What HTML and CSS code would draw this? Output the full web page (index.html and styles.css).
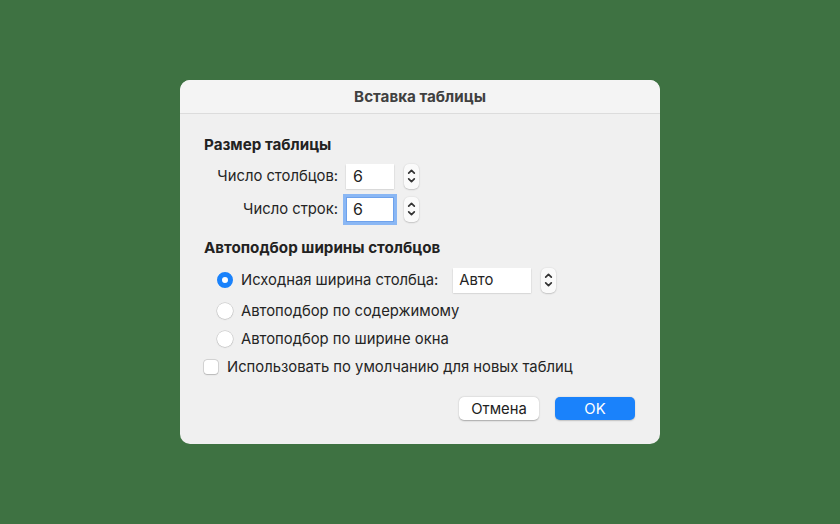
FILE: index.html
```html
<!DOCTYPE html>
<html lang="ru">
<head>
<meta charset="utf-8">
<link rel="stylesheet" href="styles.css">
</head>
<body>
<div class="dialog">
  <div class="titlebar">Вставка таблицы</div>
  <div class="content">
    <div class="section-title">Размер таблицы</div>
    <div class="size-rows">
      <div class="row">
        <span class="label">Число столбцов:</span>
        <span class="field num">6</span>
        <span class="stepper"><svg viewBox="0 0 16 26" width="16" height="26"><path d="M5 10 L8 7 L11 10" /><path d="M5 16 L8 19 L11 16" /></svg></span>
      </div>
      <div class="row">
        <span class="label">Число строк:</span>
        <span class="field num focus">6</span>
        <span class="stepper"><svg viewBox="0 0 16 26" width="16" height="26"><path d="M5 10 L8 7 L11 10" /><path d="M5 16 L8 19 L11 16" /></svg></span>
      </div>
    </div>
    <div class="section-title second">Автоподбор ширины столбцов</div>
    <div class="radios">
      <div class="radio-row first">
        <span class="radio on"></span>
        <span class="rlabel">Исходная ширина столбца:</span>
        <span class="field auto">Авто</span>
        <span class="stepper"><svg viewBox="0 0 16 26" width="16" height="26"><path d="M5 10 L8 7 L11 10" /><path d="M5 16 L8 19 L11 16" /></svg></span>
      </div>
      <div class="radio-row">
        <span class="radio"></span>
        <span class="rlabel">Автоподбор по содержимому</span>
      </div>
      <div class="radio-row">
        <span class="radio"></span>
        <span class="rlabel">Автоподбор по ширине окна</span>
      </div>
    </div>
    <div class="check-row">
      <span class="checkbox"></span>
      <span class="clabel">Использовать по умолчанию для новых таблиц</span>
    </div>
    <div class="buttons">
      <span class="btn">Отмена</span>
      <span class="btn primary">OK</span>
    </div>
  </div>
</div>
</body>
</html>
```
FILE: styles.css
```css
html, body {
  margin: 0;
  padding: 0;
}
body {
  width: 840px;
  height: 524px;
  background: #3e7242;
  display: flex;
  align-items: center;
  justify-content: center;
  font-family: Inter, "Liberation Sans", sans-serif;
  color: #242424;
}
.dialog {
  width: 480px;
  height: 364px;
  background: #f0f0f0;
  border-radius: 10px;
  overflow: hidden;
  display: flex;
  flex-direction: column;
}
.titlebar {
  height: 33px;
  background: #f4f4f4;
  border-bottom: 1px solid #dcdcdc;
  display: flex;
  align-items: center;
  justify-content: center;
  font-weight: 700;
  font-size: 15.2px;
  color: #404040;
}
.content {
  padding: 22px 24px 0 24px;
  display: flex;
  flex-direction: column;
  font-size: 14.8px;
}
.section-title {
  font-weight: 700;
  font-size: 15.2px;
  line-height: 18px;
  color: #222;
}
.section-title.second {
  margin-top: 17px;
}
.size-rows {
  display: flex;
  flex-direction: column;
  gap: 7px;
  margin-top: 9px;
}
.row {
  display: flex;
  align-items: center;
  height: 26px;
}
.label {
  width: 142px;
  text-align: right;
  padding-right: 8px;
  box-sizing: border-box;
}
.field {
  background: #fff;
  height: 25px;
  box-sizing: border-box;
  display: flex;
  align-items: center;
  padding-left: 6px;
  box-shadow: 0 0.5px 1.5px rgba(0,0,0,0.25);
  font-size: 14.8px;
}
.field.num {
  width: 48px;
  font-size: 16px;
  padding-left: 7px;
}
.field.focus {
  box-shadow: 0 0 0 3px #8ab7f4, 0 0 0 1px #6ea2ec inset;
  width: 48px;
}
.field.auto {
  width: 78px;
  margin-left: 15px;
}
.stepper {
  margin-left: 10px;
  width: 15px;
  height: 25px;
  border-radius: 5px;
  background: #fafafa;
  box-shadow: 0 0.5px 1.5px rgba(0,0,0,0.3);
  display: flex;
  align-items: center;
  justify-content: center;
}
.stepper svg {
  display: block;
}
.stepper path {
  fill: none;
  stroke: #333;
  stroke-width: 1.8;
  stroke-linecap: round;
  stroke-linejoin: round;
}
.radios {
  display: flex;
  flex-direction: column;
  margin-top: 9px;
  padding-left: 13px;
}
.radio-row {
  display: flex;
  align-items: center;
  height: 28px;
}
.radio-row.first {
  height: 28px;
  margin-bottom: 3px;
}
.radio {
  width: 16px;
  height: 16px;
  border-radius: 50%;
  box-sizing: border-box;
  background: #fff;
  box-shadow: 0 0 0 0.5px rgba(0,0,0,0.18), 0 0.5px 1.5px rgba(0,0,0,0.15);
  margin-right: 8px;
  flex: none;
}
.radio.on {
  background: #fff;
  border: 5px solid #1a82fb;
  box-shadow: none;
}
.check-row {
  display: flex;
  align-items: center;
  height: 28px;
}
.checkbox {
  width: 14px;
  height: 14px;
  border-radius: 3px;
  background: #fff;
  box-shadow: 0 0 0 0.5px rgba(0,0,0,0.2), 0 0.5px 1.5px rgba(0,0,0,0.15);
  margin-right: 9px;
  flex: none;
}
.buttons {
  display: flex;
  justify-content: flex-end;
  gap: 16px;
  margin-top: 16px;
  padding-right: 1px;
}
.btn {
  width: 80px;
  height: 23px;
  border-radius: 5px;
  background: #fff;
  box-shadow: 0 0.5px 1.5px rgba(0,0,0,0.3);
  display: flex;
  align-items: center;
  justify-content: center;
  font-size: 14.8px;
  color: #222;
}
.btn.primary {
  background: #1a82fb;
  color: #fff;
  box-shadow: 0 0.5px 1.5px rgba(0,0,0,0.2);
}
```
